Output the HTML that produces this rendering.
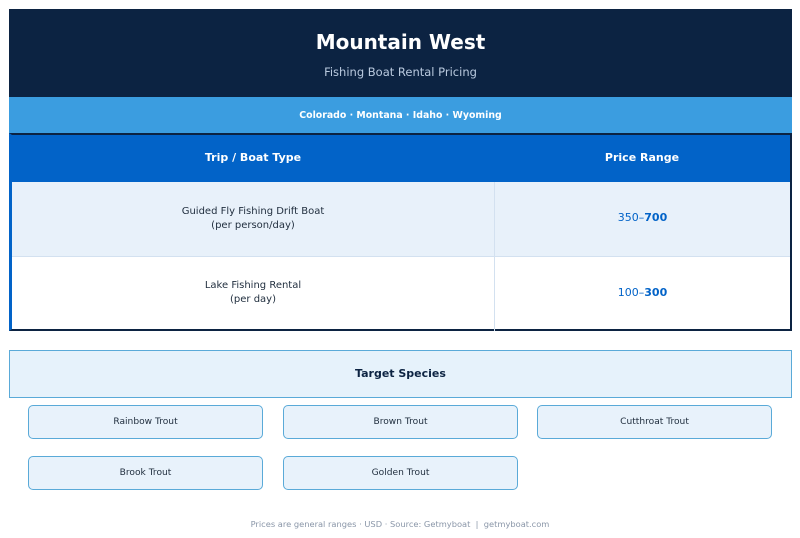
<!DOCTYPE html>
<html><head><meta charset="utf-8"><style>
*{margin:0;padding:0;box-sizing:border-box}
body{width:800px;height:538px;background:#fff;font-family:"DejaVu Sans","Liberation Sans",sans-serif;position:relative;overflow:hidden}
.a{position:absolute}
.c{display:flex;align-items:center;justify-content:center;text-align:center}
.chip{position:absolute;height:34px;width:235px;border:1px solid #5aaad8;border-radius:5px;background:#e8f2fb;font-size:9.1px;color:#1f2d3d;display:flex;align-items:center;justify-content:center}
</style></head><body>
<div class="a" style="left:9px;top:9px;width:783px;height:88px;background:#0c2342"></div>
<div class="a c" style="left:9px;top:28px;width:783px;height:28px;color:#fff;font-weight:bold;font-size:20px">Mountain West</div>
<div class="a c" style="left:9px;top:64px;width:783px;height:16px;color:#b9c9de;font-size:11.5px">Fishing Boat Rental Pricing</div>
<div class="a c" style="left:9px;top:97px;width:783px;height:36px;background:#3b9de0;color:#fff;font-weight:bold;font-size:9.4px;padding-top:1px">Colorado · Montana · Idaho · Wyoming</div>
<div class="a" style="left:9px;top:133px;width:783px;height:198px;border:2px solid #0c2342;border-left:3px solid #0263c8;background:#fff">
<div class="a" style="left:0;top:0;width:778px;height:47px;background:#0263c8"></div>
<div class="a c" style="left:0;top:0;width:482px;height:45px;color:#fff;font-weight:bold;font-size:11px">Trip / Boat Type</div>
<div class="a c" style="left:482px;top:0;width:296px;height:45px;color:#fff;font-weight:bold;font-size:11px">Price Range</div>
<div class="a" style="left:0;top:47px;width:778px;height:75px;background:#e8f1fa;border-bottom:1px solid #d3e1f0"></div>
<div class="a" style="left:482px;top:47px;width:1px;height:149px;background:#d3e1f0"></div>
<div class="a c" style="left:0;top:47px;width:482px;height:73px;font-size:10px;color:#1f2d3d;line-height:14px">Guided Fly Fishing Drift Boat<br>(per person/day)</div>
<div class="a c" style="left:483px;top:47px;width:295px;height:71px;font-size:11px;color:#0263c8">350–<b>700</b></div>
<div class="a c" style="left:0;top:122px;width:482px;height:72px;font-size:10px;color:#1f2d3d;line-height:14px">Lake Fishing Rental<br>(per day)</div>
<div class="a c" style="left:483px;top:122px;width:295px;height:70px;font-size:11px;color:#0263c8">100–<b>300</b></div>
</div>
<div class="a c" style="left:9px;top:350px;width:783px;height:48px;background:#e6f2fb;border:1px solid #5aaad8;color:#0c2342;font-weight:bold;font-size:11px;padding-bottom:2px">Target Species</div>
<div class="chip" style="left:28px;top:405px">Rainbow Trout</div>
<div class="chip" style="left:283px;top:405px">Brown Trout</div>
<div class="chip" style="left:537px;top:405px">Cutthroat Trout</div>
<div class="chip" style="left:28px;top:456px">Brook Trout</div>
<div class="chip" style="left:283px;top:456px">Golden Trout</div>
<div class="a c" style="left:0;top:517px;width:800px;height:14px;font-size:8.3px;color:#8a96a8">Prices are general ranges · USD · Source: Getmyboat &nbsp;|&nbsp; getmyboat.com</div>
</body></html>
